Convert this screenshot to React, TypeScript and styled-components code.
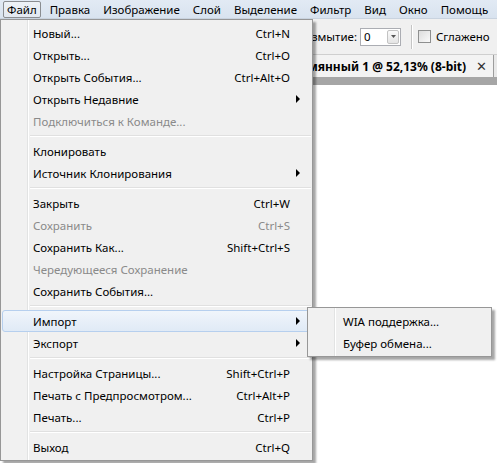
import styled, { createGlobalStyle, css } from "styled-components";

const GlobalStyle = createGlobalStyle`
  html, body {
    margin: 0;
    padding: 0;
  }
  body {
    width: 497px;
    height: 463px;
    overflow: hidden;
    background: #f0f0f0;
    font-family: "Noto Sans", "DejaVu Sans", sans-serif;
    font-size: 11.5px;
    color: #000;
  }
`;

type MenuItem =
  | { label: string; shortcut?: string; disabled?: boolean; submenu?: boolean; active?: boolean }
  | "sep";

const fileMenu: MenuItem[] = [
  { label: "Новый...", shortcut: "Ctrl+N" },
  { label: "Открыть...", shortcut: "Ctrl+O" },
  { label: "Открыть События...", shortcut: "Ctrl+Alt+O" },
  { label: "Открыть Недавние", submenu: true },
  { label: "Подключиться к Команде...", disabled: true },
  "sep",
  { label: "Клонировать" },
  { label: "Источник Клонирования", submenu: true },
  "sep",
  { label: "Закрыть", shortcut: "Ctrl+W" },
  { label: "Сохранить", shortcut: "Ctrl+S", disabled: true },
  { label: "Сохранить Как...", shortcut: "Shift+Ctrl+S" },
  { label: "Чередующееся Сохранение", disabled: true },
  { label: "Сохранить События..." },
  "sep",
  { label: "Импорт", submenu: true, active: true },
  { label: "Экспорт", submenu: true },
  "sep",
  { label: "Настройка Страницы...", shortcut: "Shift+Ctrl+P" },
  { label: "Печать с Предпросмотром...", shortcut: "Ctrl+Alt+P" },
  { label: "Печать...", shortcut: "Ctrl+P" },
  "sep",
  { label: "Выход", shortcut: "Ctrl+Q" },
];

const importMenu = ["WIA поддержка...", "Буфер обмена..."];

const menuBarItems = ["Файл", "Правка", "Изображение", "Слой", "Выделение", "Фильтр", "Вид", "Окно", "Помощь"];

const Window = styled.div`
  position: relative;
  width: 497px;
  height: 463px;
  overflow: hidden;
  display: flex;
  flex-direction: column;
`;

const MenuBar = styled.div`
  height: 19px;
  display: flex;
  align-items: center;
  gap: 5px;
  padding-left: 3px;
  background: linear-gradient(#e2eaf4, #d9e3ef);
  border-bottom: 1px solid #c9d3df;
  box-sizing: border-box;
`;

const MenuBarItem = styled.div<{ $open?: boolean }>`
  height: 17px;
  line-height: 15px;
  padding: 0 3px;
  border: 1px solid transparent;
  border-radius: 2px;
  box-sizing: border-box;
  white-space: nowrap;
  ${(p) =>
    p.$open &&
    css`
      border-color: #8a8d91;
      background: linear-gradient(#eef2f7, #e2e8f0);
    `}
`;

const Workspace = styled.div`
  flex: 1;
  display: flex;
  flex-direction: column;
`;

const Toolbar = styled.div`
  height: 35px;
  display: flex;
  align-items: center;
  padding-left: 287px;
  background: #f0f0f0;
  border-bottom: 1px solid #cfcfcf;
  white-space: nowrap;
`;

const ToolLabel = styled.span`
  width: 70px;
  text-align: right;
  margin-right: 3px;
`;

const ComboBox = styled.div`
  width: 41px;
  height: 18px;
  box-sizing: border-box;
  border: 1px solid #abadb3;
  background: #fff;
  display: flex;
  align-items: center;
  justify-content: space-between;
  padding-left: 3px;
`;

const ComboButton = styled.div`
  width: 12px;
  height: 14px;
  margin-right: 1px;
  box-sizing: border-box;
  border: 1px solid #c3c3c3;
  border-radius: 2px;
  background: linear-gradient(#fafafa, #e4e4e4);
  display: flex;
  align-items: center;
  justify-content: center;
`;

const ToolSeparator = styled.div`
  width: 1px;
  height: 24px;
  background: #c5c5c5;
  border-right: 1px solid #fff;
  margin: 0 5px 0 10px;
`;

const CheckBox = styled.div`
  width: 13px;
  height: 13px;
  box-sizing: border-box;
  border: 1px solid #8e8f8f;
  background: linear-gradient(135deg, #dcdcdc, #fafafa);
  margin-right: 5px;
`;

const TabRow = styled.div`
  height: 22px;
  display: flex;
  justify-content: flex-end;
  background: #e9e9e9;
`;

const DocTab = styled.div`
  display: flex;
  align-items: center;
  gap: 10px;
  padding: 0 6px 0 10px;
  margin-right: 3px;
  background: #f3f3f3;
  border-right: 1px solid #9d9d9d;
  font-weight: 700;
  font-size: 12px;
  white-space: nowrap;
`;

const CloseMark = styled.span`
  font-weight: 700;
  font-size: 13px;
  color: #333;
`;

const PanelBand = styled.div`
  height: 8px;
  background: #a6a6a6;
`;

const Canvas = styled.div`
  flex: 1;
  background: #fff;
`;

const DropMenu = styled.div<{ $left: number; $top: number; $width: number }>`
  position: absolute;
  left: ${(p) => p.$left}px;
  top: ${(p) => p.$top}px;
  width: ${(p) => p.$width}px;
  box-sizing: border-box;
  border: 1px solid #979797;
  padding: 2px 1px;
  background: linear-gradient(
    to right,
    #f1f1f1 0 26px,
    #e2e3e3 26px 27px,
    #ffffff 27px 28px,
    #f0f0f0 28px
  );
  box-shadow: 3px 3px 2px rgba(0, 0, 0, 0.35);
  z-index: 5;
`;

const Row = styled.div<{ $disabled?: boolean; $active?: boolean; $indent: number }>`
  display: grid;
  grid-template-columns: 1fr auto 20px;
  align-items: center;
  height: 22px;
  box-sizing: border-box;
  padding-left: ${(p) => p.$indent}px;
  border: 1px solid transparent;
  border-radius: 3px;
  white-space: nowrap;
  color: ${(p) => (p.$disabled ? "#8a8a8a" : "#000")};
  ${(p) =>
    p.$active &&
    css`
      border-color: #b6cfee;
      background: linear-gradient(#f0f5fb, #e0eaf6);
    `}
`;

const Shortcut = styled.span`
  text-align: right;
`;

const Arrow = styled.span`
  justify-self: start;
  margin-left: 6px;
  width: 0;
  height: 0;
  border-top: 4px solid transparent;
  border-bottom: 4px solid transparent;
  border-left: 4px solid #000;
`;

const Separator = styled.div`
  height: 8px;
  display: flex;
  align-items: center;
  padding-left: 28px;
  &::after {
    content: "";
    flex: 1;
    height: 1px;
    background: #e0e0e0;
    border-bottom: 1px solid #fff;
  }
`;

export default function App() {
  return (
    <>
      <GlobalStyle />
      <Window>
        <MenuBar>
          {menuBarItems.map((m, i) => (
            <MenuBarItem key={m} $open={i === 0}>
              {m}
            </MenuBarItem>
          ))}
        </MenuBar>
        <Workspace>
          <Toolbar>
            <ToolLabel>Размытие:</ToolLabel>
            <ComboBox>
              0
              <ComboButton>
                <svg width="5" height="3" viewBox="0 0 5 3">
                  <path d="M0 0h5L2.5 3z" fill="#555" />
                </svg>
              </ComboButton>
            </ComboBox>
            <ToolSeparator />
            <CheckBox />
            <span>Сглажено</span>
          </Toolbar>
          <TabRow>
            <DocTab>
              Безымянный 1 @ 52,13% (8-bit)
              <CloseMark>✕</CloseMark>
            </DocTab>
          </TabRow>
          <PanelBand />
          <Canvas />
        </Workspace>

        <DropMenu $left={0} $top={19} $width={313}>
          {fileMenu.map((item, i) =>
            item === "sep" ? (
              <Separator key={i} />
            ) : (
              <Row key={i} $indent={30} $disabled={item.disabled} $active={item.active}>
                <span>{item.label}</span>
                <Shortcut>{item.shortcut}</Shortcut>
                {item.submenu ? <Arrow /> : <span />}
              </Row>
            )
          )}
        </DropMenu>

        <DropMenu $left={307} $top={307} $width={185}>
          {importMenu.map((label) => (
            <Row key={label} $indent={33}>
              <span>{label}</span>
              <span />
              <span />
            </Row>
          ))}
        </DropMenu>
      </Window>
    </>
  );
}
